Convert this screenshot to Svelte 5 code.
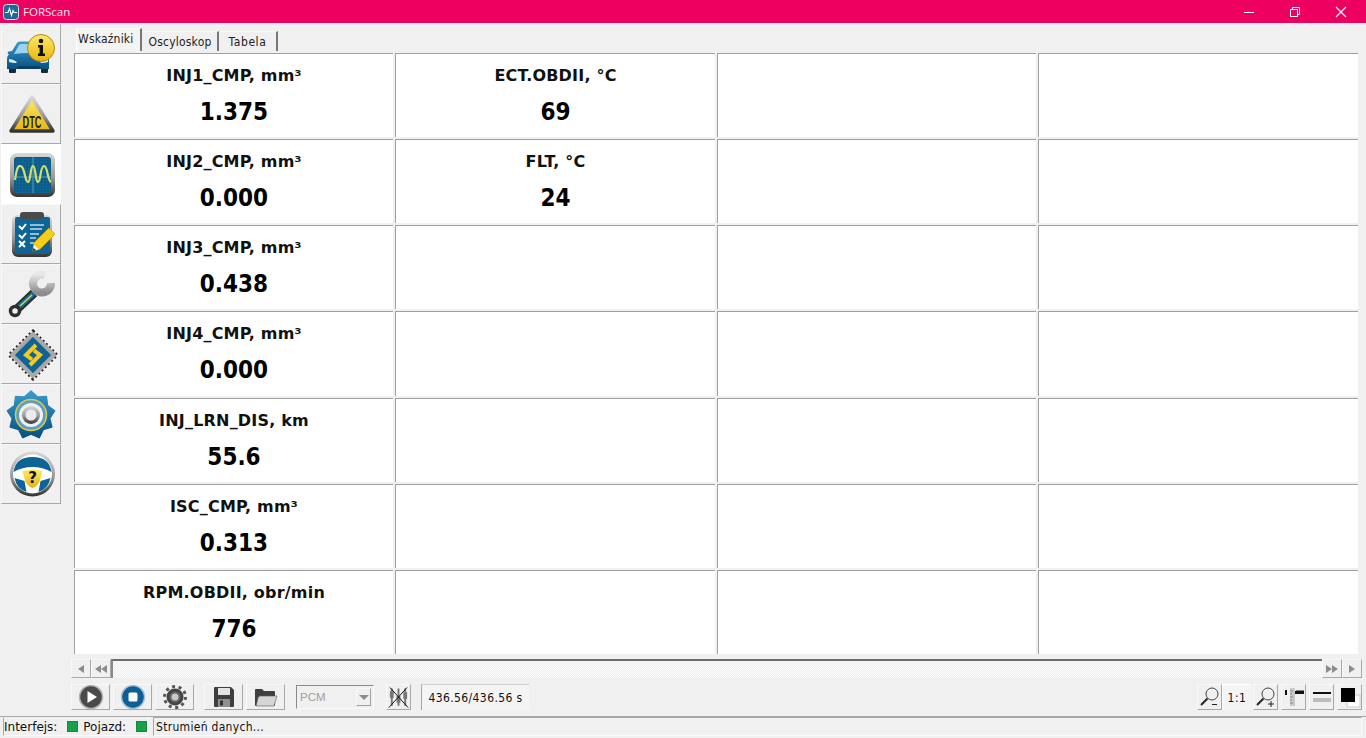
<script>
  const rows = [
    ['INJ1_CMP, mm³', '1.375', 'ECT.OBDII, °C', '69'],
    ['INJ2_CMP, mm³', '0.000', 'FLT, °C', '24'],
    ['INJ3_CMP, mm³', '0.438'],
    ['INJ4_CMP, mm³', '0.000'],
    ['INJ_LRN_DIS, km', '55.6'],
    ['ISC_CMP, mm³', '0.313'],
    ['RPM.OBDII, obr/min', '776'],
  ];

  // one flat list of 28 cells, row by row
  const cells = rows.flatMap((r) => [
    { label: r[0], value: r[1] },
    { label: r[2], value: r[3] },
    {},
    {},
  ]);

  const tabs = ['Wskaźniki', 'Oscyloskop', 'Tabela'];

  // spiky outline of the settings gear
  const gearPoints = Array.from({ length: 18 }, (_, i) => {
    const a = (i / 18) * Math.PI * 2 - Math.PI / 2;
    const r = i % 2 ? 19 : 24;
    return `${(30 + r * Math.cos(a)).toFixed(1)},${(31 + r * Math.sin(a)).toFixed(1)}`;
  }).join(' ');
</script>

<div class="window">
  <header class="titlebar">
    <svg class="app-icon" width="16" height="16" viewBox="0 0 16 16">
      <rect x="0.5" y="0.5" width="15" height="15" rx="3" fill="#1d6a94" stroke="#cfe0ea" />
      <path d="M2 8.500h3l1.500-4 2 7 1.500-5 1 2h3" fill="none" stroke="#fff" stroke-width="1.100" />
    </svg>
    <span class="app-name">FORScan</span>
    <div class="win-controls">
      <svg width="12" height="12" viewBox="0 0 12 12"><path d="M1 6.500h10" stroke="#fff" /></svg>
      <svg width="12" height="12" viewBox="0 0 12 12" fill="none" stroke="#fff">
        <rect x="1.500" y="3.500" width="7" height="7" /><path d="M3.500 3.500v-2h7v7h-2" />
      </svg>
      <svg width="12" height="12" viewBox="0 0 12 12"><path d="M1 1l10 10M11 1L1 11" stroke="#fff" stroke-width="1.100" /></svg>
    </div>
  </header>

  <svg width="0" height="0" class="defs">
    <defs>
      <linearGradient id="blue" x1="0" y1="0" x2="0" y2="1">
        <stop offset="0" stop-color="#3a9ad0" /><stop offset="1" stop-color="#07507f" />
      </linearGradient>
      <linearGradient id="yellow" x1="0" y1="0" x2="0" y2="1">
        <stop offset="0" stop-color="#fdea6a" /><stop offset="1" stop-color="#e8b410" />
      </linearGradient>
      <linearGradient id="metal" x1="0" y1="0" x2="0" y2="1">
        <stop offset="0" stop-color="#d9d9d9" /><stop offset="0.55" stop-color="#9a9a9a" /><stop offset="1" stop-color="#333" />
      </linearGradient>
      <linearGradient id="steel" x1="0" y1="0" x2="0" y2="1">
        <stop offset="0" stop-color="#e8e8e8" /><stop offset="1" stop-color="#8d8d8d" />
      </linearGradient>
      <pattern id="dots" width="3" height="3" patternUnits="userSpaceOnUse">
        <rect width="1" height="1" fill="#1f7099" />
      </pattern>
    </defs>
  </svg>

  <div class="main">
    <nav class="sidebar">
      <button class="side-btn">
        <svg width="60" height="60" viewBox="0 0 60 60">
          <path d="M8 43h7v5q0 1-1 1H9q-1 0-1-1zM40 43h7v5q0 1-1 1h-5q-1 0-1-1z" fill="#1c2a33" />
          <path d="M7 30q-1-2 1-2.500l3-.500 5-8q1-1.500 3-1.500h15q2 0 3 1.500l5 8 3 .500q2 .500 1 2.500 2 2 2 6v9H6v-9q0-4 2-6z" fill="url(#blue)" />
          <path d="M13 30l5-9q.500-1 2-1h15q1.500 0 2 1l5 9q-15-2-29 0z" fill="#9ed3ee" />
          <path d="M8 35q4 0 8 3l-1 1q-4 0-7-1zM47 35q-4 0-8 3l1 1q4 0 7-1z" fill="#d5eef9" />
          <path d="M17 42h21l1 3H16z" fill="#0a3f63" />
          <circle cx="40" cy="24" r="13.500" fill="url(#yellow)" stroke="#b98a08" />
          <circle cx="40" cy="17" r="2.300" fill="#111" />
          <path d="M37 21h5v8.500h2V32h-7v-2.500h1.600v-6H37z" fill="#111" />
        </svg>
      </button>
      <button class="side-btn">
        <svg width="60" height="60" viewBox="0 0 60 60">
          <path d="M31 13L52 47H10z" fill="url(#yellow)" stroke="url(#metal)" stroke-width="3.500" stroke-linejoin="round" />
          <text x="31" y="44" class="dtc" text-anchor="middle" textLength="19" lengthAdjust="spacingAndGlyphs">DTC</text>
        </svg>
      </button>
      <button class="side-btn active">
        <svg width="60" height="60" viewBox="0 0 60 60">
          <rect x="9" y="9" width="45" height="44" rx="7" fill="url(#metal)" />
          <rect x="13" y="13" width="37" height="36" rx="3" fill="#0a5f8c" />
          <rect x="13" y="13" width="37" height="36" rx="3" fill="url(#dots)" />
          <path d="M13 33h37M32 13v36" stroke="#3f8bb0" stroke-width="1.500" />
          <path d="M14 36C16 22 18 20 21 23C24 26 24 38 27 38C30 38 29 22 32 22C35 22 34 38 37 38C40 38 39 22 43 22C47 22 46 36 50 38" fill="none" stroke="#d9dc6c" stroke-width="2.200" />
        </svg>
      </button>
      <button class="side-btn">
        <svg width="60" height="60" viewBox="0 0 60 60">
          <rect x="11" y="11" width="40" height="42" rx="6" fill="url(#metal)" />
          <rect x="14" y="13" width="35" height="37" rx="2" fill="#0f6496" />
          <rect x="19" y="8" width="24" height="7" rx="3" fill="#4a4a4a" />
          <path d="M18 22l3 3 4-5M18 31l3 3 4-5M18 37l6 6M24 37l-6 6" fill="none" stroke="#fff" stroke-width="2" />
          <path d="M29 21h14M29 25h12M29 30h9M29 34h6M29 39h4" stroke="#bcdcee" stroke-width="1.300" />
          <path d="M33 39l14-14q1-1 2 0l4 4q1 1 0 2L39 45l-7 2z" fill="#f2cf1f" stroke="#d9ab0c" />
          <path d="M33 41l-1 6 6-2z" fill="#f5f5f5" />
          <path d="M32.500 44l-.500 3 3-.800z" fill="#111" />
        </svg>
      </button>
      <button class="side-btn">
        <svg width="60" height="60" viewBox="0 0 60 60">
          <path d="M33 29L14 47" stroke="#2e2e2e" stroke-width="9" />
          <path d="M33 29L18 43" stroke="#0f6d9c" stroke-width="5" />
          <path d="M31 31L19 42" stroke="#d3d84a" stroke-width="1.500" />
          <circle cx="14" cy="47" r="4.500" fill="#f0f0f0" stroke="#2e2e2e" stroke-width="3.500" />
          <path d="M44 11A9 9 0 1 0 50 19" fill="none" stroke="url(#steel)" stroke-width="8" />
        </svg>
      </button>
      <button class="side-btn">
        <svg width="60" height="60" viewBox="0 0 60 60">
          <path d="M32 7L56 31L32 55L8 31Z" fill="none" stroke="#222" stroke-width="3" stroke-dasharray="2 2.500" />
          <path d="M32 10L53 31L32 52L11 31Z" fill="#0f6496" stroke="#a9a9a9" stroke-width="4" stroke-linejoin="round" />
          <path d="M35 21L25 31l6 4.500M29 41l10-10-6-4.500" fill="none" stroke="#f1c92a" stroke-width="4" />
        </svg>
      </button>
      <button class="side-btn">
        <svg width="60" height="60" viewBox="0 0 60 60">
          <polygon points={gearPoints} fill="url(#blue)" stroke="url(#blue)" stroke-width="1.500" stroke-linejoin="round" />
          <circle cx="30" cy="31" r="15.500" fill="#5f9dbf" stroke="#dccb4a" stroke-width="1.500" />
          <circle cx="30" cy="31" r="12" fill="#eef1f3" />
          <circle cx="30" cy="31" r="9" fill="url(#metal)" />
          <circle cx="30" cy="31" r="5.500" fill="#ececec" />
        </svg>
      </button>
      <button class="side-btn">
        <svg width="60" height="60" viewBox="0 0 60 60">
          <g transform="translate(1.500 -1)">
            <circle cx="30" cy="31" r="22.500" fill="url(#metal)" />
            <circle cx="30" cy="31" r="19.500" fill="#fff" />
            <path d="M11 29q2-15 19-15t19 15q-9-5-19-5t-19 5z" fill="#0f6496" />
            <path d="M12 35l10 3 2 11q-10-3-12-14zM48 35l-10 3-2 11q10-3 12-14z" fill="#0f6496" />
            <path d="M20 28q10-3 20 0l-3 11q-3 5-7 6-4-1-7-6z" fill="url(#yellow)" />
            <text x="30" y="40" class="qmark" text-anchor="middle">?</text>
          </g>
        </svg>
      </button>
    </nav>

    <div class="content">
      <div class="tabs">
        {#each tabs as tab, i}
          <div class="tab" class:current={i === 0}>{tab}</div>
        {/each}
      </div>

      <div class="board">
        {#each cells as cell}
          <div class="cell">
            {#if cell.label}
              <div class="label">{cell.label}</div>
              <div class="value">{cell.value}</div>
            {/if}
          </div>
        {/each}
      </div>

      <div class="scrollbar">
        <div class="sb-btn"><span class="tri left"></span></div>
        <div class="sb-btn"><span class="tri left"></span><span class="tri left"></span></div>
        <div class="sb-track"></div>
        <div class="sb-btn"><span class="tri right"></span><span class="tri right"></span></div>
        <div class="sb-btn"><span class="tri right"></span></div>
      </div>

      <div class="toolbar">
        <button class="tool wide">
          <svg width="26" height="26" viewBox="0 0 26 26">
            <circle cx="13" cy="13" r="11.500" fill="#4a4a4a" stroke="#b5b5b5" stroke-width="1.500" />
            <path d="M9.500 7l9.500 6-9.500 6z" fill="#fff" />
          </svg>
        </button>
        <button class="tool wide">
          <svg width="26" height="26" viewBox="0 0 26 26">
            <circle cx="13" cy="13" r="11.500" fill="#0d5f96" stroke="#a9c2d2" stroke-width="1.500" />
            <rect x="8.500" y="8.500" width="9" height="9" rx="1.500" fill="#fff" />
          </svg>
        </button>
        <button class="tool wide">
          <svg width="24" height="24" viewBox="0 0 24 24">
            <circle cx="12" cy="12" r="10.500" fill="none" stroke="#555" stroke-width="3" stroke-dasharray="3 3.600" />
            <circle cx="12" cy="12" r="7" fill="#666" stroke="#444" stroke-width="3" />
            <circle cx="12" cy="12" r="3.500" fill="#c9c9c9" />
          </svg>
        </button>
        <button class="tool wide after-gap">
          <svg width="24" height="24" viewBox="0 0 24 24">
            <path d="M3 2h16l3 3v16q0 1-1 1H3q-1 0-1-1V3q0-1 1-1z" fill="#3f3f3f" />
            <rect x="6" y="3" width="12" height="7" fill="#e4e4e4" />
            <rect x="6" y="14" width="12" height="8" fill="#8f8f8f" />
            <rect x="8" y="15.500" width="3" height="5" fill="#333" />
          </svg>
        </button>
        <button class="tool wide">
          <svg width="24" height="24" viewBox="0 0 24 24">
            <path d="M1 5q0-1 1-1h6l2 2h10q1 0 1 1v13q0 1-1 1H2q-1 0-1-1z" fill="#3f3f3f" />
            <path d="M6 11h17l-3 10H2l2-8q.500-2 2-2z" fill="#d5d5d5" stroke="#555" stroke-width=".6" />
          </svg>
        </button>
        <div class="combo">
          <span class="combo-text">PCM</span>
          <span class="combo-arrow"><span class="down"></span></span>
        </div>
        <button class="tool narrow x-btn">
          <svg width="24" height="24" viewBox="0 0 24 24">
            <path d="M5 3v18M12 3v18M19 3v18" stroke="#777" stroke-width="2" />
            <rect x="3" y="6" width="4" height="7" fill="#777" /><rect x="10" y="11" width="4" height="7" fill="#777" /><rect x="17" y="7" width="4" height="7" fill="#777" />
            <path d="M3 2l19 21M21 2L2 23" stroke="#111" />
          </svg>
        </button>
        <div class="time">436.56/436.56 s</div>

        <div class="tools-right">
          <button class="tool zoom-btn">
            <svg width="22" height="22" viewBox="0 0 22 22" fill="none" stroke="#222">
              <circle cx="13" cy="8" r="6" stroke="#444" /><path d="M8.500 12.500L2 19" stroke-width="2" /><path d="M13 18.500h5" />
            </svg>
          </button>
          <div class="ratio">1:1</div>
          <button class="tool zoom-btn">
            <svg width="22" height="22" viewBox="0 0 22 22" fill="none" stroke="#222">
              <circle cx="13" cy="8" r="6" stroke="#444" /><path d="M8.500 12.500L2 19" stroke-width="2" /><path d="M13 18h6M16 15v6" />
            </svg>
          </button>
          <button class="tool zoom-btn">
            <svg width="22" height="22" viewBox="0 0 22 22">
              <rect x="7" y="2" width="5" height="18" fill="#c8c8c8" />
              <path d="M7 5h3M7 8h2M7 11h3M7 14h2M7 17h3" stroke="#888" />
              <rect x="2" y="4" width="2" height="5" fill="#111" />
              <rect x="12" y="5" width="9" height="3" fill="#111" />
              <path d="M14 4v1M16 4v1M18 4v1M20 4v1" stroke="#111" />
            </svg>
          </button>
          <button class="tool zoom-btn">
            <svg width="22" height="22" viewBox="0 0 22 22">
              <rect x="2" y="6" width="18" height="2" fill="#111" /><rect x="2" y="12" width="18" height="4" fill="#bcbcbc" />
            </svg>
          </button>
          <button class="tool zoom-btn">
            <svg width="22" height="22" viewBox="0 0 22 22">
              <rect x="8" y="9" width="13" height="12" fill="#fff" stroke="#ccc" />
              <rect x="2" y="2" width="14" height="14" fill="#000" />
            </svg>
          </button>
        </div>
      </div>
    </div>
  </div>

  <footer class="statusbar">
    <div class="status-left">
      <span>Interfejs:</span><i class="led"></i><span>Pojazd:</span><i class="led"></i>
    </div>
    <div class="status-msg">Strumień danych...</div>
  </footer>
</div>

<style>
  :global(body) {
    background: #f0f0f0;
  }

  .window {
    display: flex;
    flex-direction: column;
    height: 738px;
    overflow: hidden;
    background: #f0f0f0;
    font-family: "DejaVu Sans", sans-serif;
    color: #111;
  }

  .defs {
    position: absolute;
  }

  .titlebar {
    display: flex;
    align-items: center;
    height: 23px;
    flex-shrink: 0;
    padding-left: 3px;
    background: #ee0060;
    color: #fff;
  }

  .app-name {
    margin-left: 4px;
    font: 11.5px "Open Sans", sans-serif;
    color: #fbe6ee;
  }

  .win-controls {
    display: flex;
    align-items: center;
    gap: 34px;
    margin-left: auto;
    margin-right: 19px;
  }

  .main {
    display: flex;
    flex: 1;
    min-height: 0;
  }

  .sidebar {
    display: flex;
    flex-direction: column;
    width: 71px;
    flex-shrink: 0;
    padding: 1px 0 0 1px;
    box-sizing: border-box;
  }

  .side-btn {
    width: 60px;
    height: 60px;
    padding: 0;
    box-sizing: border-box;
    background: #f0f0f0;
    border: 1px solid;
    border-color: #f8f8f8 #a8a8a8 #a8a8a8 #f8f8f8;
    overflow: hidden;
  }

  .side-btn svg {
    display: block;
    margin: -1px;
  }

  .side-btn.active {
    background: #fff;
    border-color: #fff;
  }

  .content {
    flex: 1;
    display: flex;
    flex-direction: column;
    min-width: 0;
  }

  .tabs {
    display: flex;
    align-items: flex-end;
    height: 30px;
    flex-shrink: 0;
    padding-left: 5px;
    box-sizing: border-box;
  }

  .tab {
    display: flex;
    align-items: center;
    height: 19px;
    margin-bottom: 2px;
    font-size: 12px;
    font-stretch: condensed;
    letter-spacing: 0.2px;
    color: #222;
    border-right: 2px solid #777;
    border-top: 1px solid #f8f8f8;
    white-space: nowrap;
  }

  .tab.current {
    height: 23px;
    padding: 0 6px 3px 1px;
    box-sizing: border-box;
    background: #f4f4f4;
    border-left: 1px solid #fff;
  }

  .tab:nth-child(2) {
    padding: 0 5px 0 7px;
  }

  .tab:nth-child(3) {
    padding: 0 10px 0 10px;
    letter-spacing: 0.6px;
  }

  .board {
    display: grid;
    grid-template-columns: 319px 320px 319px 320px;
    grid-template-rows: repeat(7, 84.15px);
    gap: 2px;
    height: 602px;
    flex-shrink: 0;
    margin: 0 8px 0 3px;
    overflow: hidden;
  }

  .cell {
    display: flex;
    flex-direction: column;
    align-items: center;
    box-sizing: border-box;
    background: #fff;
    border-top: 1px solid #a0a0a0;
    border-left: 1px solid #a0a0a0;
  }

  .label {
    margin-top: 13px;
    font-size: 16px;
    font-weight: 700;
    letter-spacing: 0.2px;
    line-height: 18px;
    white-space: nowrap;
  }

  .value {
    margin-top: 13px;
    font-size: 24px;
    font-stretch: condensed;
    font-weight: 700;
    line-height: 28px;
    color: #000;
  }

  .scrollbar {
    display: flex;
    align-items: stretch;
    height: 19px;
    margin: 4px 4px 0 0;
    flex-shrink: 0;
  }

  .sb-btn {
    display: flex;
    align-items: center;
    justify-content: center;
    width: 20px;
    box-sizing: border-box;
    background: #f0f0f0;
    border: 1px solid;
    border-color: #f8f8f8 #a8a8a8 #a8a8a8 #f8f8f8;
  }

  .sb-track {
    flex: 1;
    box-sizing: border-box;
    border-top: 2px solid #6e6e6e;
    border-left: 2px solid #8a8a8a;
    background: repeating-conic-gradient(#f0f0f0 0 25%, #fafafa 0 50%) 0 0 / 2px 2px;
  }

  .tri {
    width: 0;
    height: 0;
    border-top: 4px solid transparent;
    border-bottom: 4px solid transparent;
  }

  .tri.left {
    border-right: 6px solid #8c8c8c;
  }

  .tri.right {
    border-left: 6px solid #8c8c8c;
  }

  .toolbar {
    display: flex;
    align-items: center;
    height: 26px;
    margin: 6px 4px 0 0;
    flex-shrink: 0;
    gap: 3px;
  }

  .tool {
    display: flex;
    align-items: center;
    justify-content: center;
    height: 26px;
    padding: 0;
    box-sizing: border-box;
    background: #f0f0f0;
    border: 1px solid;
    border-color: #f8f8f8 #a8a8a8 #a8a8a8 #f8f8f8;
  }

  .wide {
    width: 39px;
  }

  .after-gap {
    margin-left: 7px;
  }

  .combo {
    display: flex;
    align-items: center;
    justify-content: space-between;
    width: 78px;
    height: 24px;
    margin-left: 8px;
    padding: 2px 2px 2px 3px;
    box-sizing: border-box;
    background: #f0f0f0;
    border: 1px solid;
    border-color: #8a8a8a #fafafa #fafafa #8a8a8a;
  }

  .combo-text {
    font: 11.5px "Liberation Sans", sans-serif;
    color: #a0a0a0;
  }

  .combo-arrow {
    display: flex;
    align-items: center;
    justify-content: center;
    width: 15px;
    height: 18px;
    box-sizing: border-box;
    border: 1px solid;
    border-color: #f8f8f8 #a0a0a0 #a0a0a0 #f8f8f8;
  }

  .down {
    width: 0;
    height: 0;
    border-left: 5px solid transparent;
    border-right: 5px solid transparent;
    border-top: 5px solid #8c8c8c;
  }

  .narrow {
    width: 25px;
  }

  .x-btn {
    margin-left: 9px;
  }

  .time {
    display: flex;
    align-items: center;
    justify-content: center;
    width: 108px;
    height: 26px;
    margin-left: 7px;
    box-sizing: border-box;
    font-size: 12px;
    font-stretch: condensed;
    letter-spacing: 0.4px;
    background: #f4f4f4;
    border-left: 1px solid #a8a8a8;
    border-top: 1px solid #d0d0d0;
  }

  .tools-right {
    display: flex;
    align-items: center;
    margin-left: auto;
  }

  .zoom-btn {
    width: 25px;
    margin-left: 3px;
  }

  .tools-right .zoom-btn:first-child {
    margin-left: 0;
  }

  .ratio {
    display: flex;
    align-items: center;
    justify-content: center;
    width: 29px;
    height: 26px;
    box-sizing: border-box;
    font-size: 12px;
    font-stretch: condensed;
    letter-spacing: 0.5px;
    background: #f4f4f4;
    border-top: 1px solid #fff;
    border-left: 1px solid #fff;
  }

  .ratio + .zoom-btn {
    margin-left: 2px;
  }

  .statusbar {
    display: flex;
    gap: 5px;
    height: 22px;
    flex-shrink: 0;
    margin-top: 5px;
    padding: 0 4px 2px 3px;
    box-sizing: border-box;
    font-size: 12px;
    border-top: 1px solid #a8a8a8;
  }

  .status-left,
  .status-msg {
    display: flex;
    align-items: center;
    box-sizing: border-box;
    border: 1px solid;
    border-color: #a8a8a8 #fafafa #fafafa #a8a8a8;
  }

  .status-left {
    width: 145px;
    padding-left: 0;
    border-top-color: transparent;
  }

  .status-left span:last-of-type {
    margin-left: 5px;
  }

  .status-msg {
    flex: 1;
    padding-left: 2px;
    font-stretch: condensed;
    letter-spacing: 0.3px;
  }

  .led {
    width: 11px;
    height: 11px;
    margin-left: 10px;
    background: #17a14a;
    border: 1px solid #138a3e;
    box-sizing: border-box;
  }

  .dtc {
    font: 700 16px "Liberation Sans", sans-serif;
    fill: #222;
  }

  .qmark {
    font: 700 15px "DejaVu Sans", sans-serif;
    fill: #111;
  }
</style>
